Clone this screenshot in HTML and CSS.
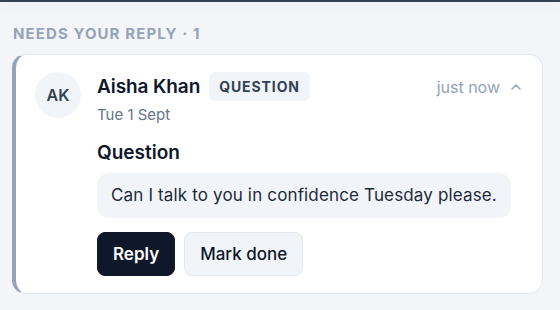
FILE: index.html
```html
<!DOCTYPE html>
<html>
<head>
<meta charset="utf-8">
<link rel="stylesheet" href="styles.css">
</head>
<body>
<div class="topbar"></div>
<section class="section">
  <h2 class="section-title">NEEDS YOUR REPLY · 1</h2>
  <article class="card">
    <div class="avatar">AK</div>
    <div class="content">
      <div class="head">
        <div class="who">
          <div class="name-row">
            <span class="name">Aisha Khan</span>
            <span class="tag">QUESTION</span>
          </div>
          <div class="date">Tue 1 Sept</div>
        </div>
        <div class="meta">
          <span class="time">just now</span>
          <svg class="chev" width="12" height="8" viewBox="0 0 12 8"><path d="M2 6 L6 2 L10 6" fill="none" stroke="#94a3b8" stroke-width="1.5" stroke-linecap="round" stroke-linejoin="round"/></svg>
        </div>
      </div>
      <h3 class="q-title">Question</h3>
      <div class="bubble">Can I talk to you in confidence Tuesday please.</div>
      <div class="actions">
        <button class="btn btn-primary">Reply</button>
        <button class="btn btn-secondary">Mark done</button>
      </div>
    </div>
  </article>
</section>
</body>
</html>
```
FILE: styles.css
```css
* { box-sizing: border-box; }
html, body { margin: 0; padding: 0; }
body {
  background: #f4f5f9;
  font-family: Inter, "Noto Sans", sans-serif;
  color: #0f172a;
  width: 560px;
  height: 310px;
  overflow: hidden;
}
.topbar {
  height: 2px;
  background: #334155;
  box-shadow: 0 4px 14px rgba(15, 23, 42, 0.12);
}
.section { padding: 22px 17px 0 12px; }
.section-title {
  margin: 0 0 0 1px;
  font-size: 15px;
  font-weight: 700;
  letter-spacing: 1.1px;
  color: #94a3b8;
  line-height: 20px;
}
.card {
  margin-top: 10px;
  background: #fff;
  border: 1px solid #e2e8f0;
  border-left: 4px solid #94a3b8;
  border-radius: 14px;
  display: flex;
  padding: 17px 20px 14px 19px;
  height: 240px;
}
.avatar {
  width: 46px;
  height: 46px;
  border-radius: 50%;
  background: #f1f5f9;
  color: #334155;
  font-size: 16px;
  font-weight: 600;
  display: flex;
  align-items: center;
  justify-content: center;
  flex: none;
  margin-top: 0;
}
.content { flex: 1; margin-left: 16px; }
.head { display: flex; justify-content: space-between; align-items: flex-start; }
.name-row { display: flex; align-items: center; gap: 9px; }
.name { font-size: 19px; font-weight: 600; letter-spacing: -0.1px; }
.tag {
  background: #f1f5f9;
  color: #334155;
  font-size: 14px;
  font-weight: 700;
  letter-spacing: 0.9px;
  padding: 5px 10px;
  border-radius: 6px;
  line-height: 19px;
}
.date { color: #64748b; font-size: 15px; margin-top: 4px; }
.meta { display: flex; align-items: center; gap: 10px; margin-top: 5px; }
.time { color: #94a3b8; font-size: 16px; }
.chev { display: block; }
.q-title { margin: 17px 0 0; font-size: 19px; font-weight: 600; line-height: 24px; }
.bubble {
  margin-top: 8px;
  background: #f1f5f9;
  border-radius: 12px;
  padding: 11px 14px;
  font-size: 17px;
  letter-spacing: 0.15px;
  color: #1e293b;
  line-height: 23px;
  width: fit-content;
}
.actions { display: flex; gap: 9px; margin-top: 14px; }
.btn {
  font-family: inherit;
  font-size: 17px;
  height: 44px;
  border-radius: 8px;
  padding: 0 15px;
  cursor: pointer;
}
.btn-primary { background: #0f172a; color: #fff; border: 1px solid #0f172a; font-weight: 600; }
.btn-secondary { background: #f1f5f9; color: #0f172a; border: 1px solid #e2e8f0; font-weight: 500; }
```
